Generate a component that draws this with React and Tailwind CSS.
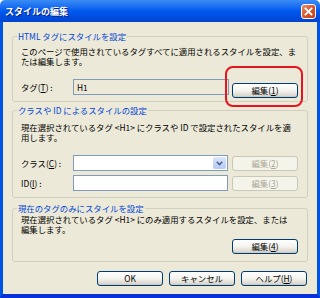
import { useState } from 'react'

const font = { fontFamily: '"Noto Sans CJK JP", "Noto Sans", sans-serif' }

function XpButton({ children, disabled, className = '' }) {
  return (
    <button
      disabled={disabled}
      className={`h-[15px] w-[66px] rounded-[3px] border text-[8.4px] leading-[13px] ${
        disabled
          ? 'border-[#c9c7ba] bg-[#f5f4ea] text-[#aca899]'
          : 'border-[#003c74] bg-gradient-to-b from-[#ffffff] via-[#f3f3ef] to-[#d6d0c5] text-black shadow-[inset_0_-1px_0_#cdcac0]'
      } ${className}`}
    >
      {children}
    </button>
  )
}

function Group({ title, children, className = '' }) {
  return (
    <fieldset className={`mx-[9px] rounded-[3px] border border-[#d0d0bf] pl-[8px] pr-[9px] ${className}`}>
      <legend className="-ml-[4px] px-[1px] text-[8.4px] leading-[10px] text-[#0046d5]">{title}</legend>
      {children}
    </fieldset>
  )
}

export default function App() {
  const [cls, setCls] = useState('')
  const [id, setId] = useState('')

  return (
    <div className="flex h-[298px] w-[320px] flex-col overflow-hidden bg-white" style={font}>
      {/* Title bar */}
      <div className="flex h-[22px] shrink-0 items-center justify-between rounded-t-[5px] bg-gradient-to-b from-[#3b8cf5] via-[#0058ee] to-[#0043d0] pl-[5px] pr-[4px]">
        <span className="text-[9px] font-bold leading-none text-white [text-shadow:1px_1px_0_#0a1e80]">スタイルの編集</span>
        <div className="flex h-[15px] w-[15px] items-center justify-center rounded-[3px] border border-white bg-gradient-to-br from-[#e88f6c] via-[#d9542c] to-[#c2401c]">
          <svg width="9" height="9" viewBox="0 0 9 9">
            <path d="M1.5 1.5 L7.5 7.5 M7.5 1.5 L1.5 7.5" stroke="#fff" strokeWidth="1.8" strokeLinecap="square" />
          </svg>
        </div>
      </div>

      {/* Body */}
      <div className="flex flex-1 flex-col border-x-[3px] border-b-[4px] border-x-[#0054e3] border-b-[#0831d9] bg-[#ece9d8] text-black">
        <Group title="HTML タグにスタイルを設定" className="mt-[9px] pb-[6px] pt-[5px]">
          <p className="whitespace-nowrap text-[8.4px] leading-[10px]">
            このページで使用されているタグすべてに適用されるスタイルを設定、ま
            <br />
            たは編集します。
          </p>
          <div className="mt-[13px] flex h-[16px] items-center">
            <span className="w-[52px] text-[8.4px] leading-none">
              タグ(<u>T</u>) :
            </span>
            <div className="flex h-[16px] w-[156px] items-center border border-[#7f9db9] bg-[#ece9d8] px-[3px] text-[8.4px]">H1</div>
            <div className="relative ml-auto">
              <XpButton>
                編集(<u>1</u>)
              </XpButton>
              <div className="pointer-events-none absolute -bottom-[8px] -left-[7px] -right-[5px] -top-[9px] rounded-[8px] border-2 border-[#e5141e]" />
            </div>
          </div>
        </Group>

        <Group title="クラスや ID によるスタイルの設定" className="mt-[3px] pb-[6px] pt-[7px]">
          <p className="whitespace-nowrap text-[8.4px] leading-[10px]">
            現在選択されているタグ &lt;H1&gt; にクラスや ID で設定されたスタイルを適
            <br />
            用します。
          </p>
          <div className="mt-[13px] flex h-[16px] items-center">
            <span className="w-[52px] text-[8.4px] leading-none">
              クラス(<u>C</u>) :
            </span>
            <div className="flex h-[16px] w-[155px] items-center border border-[#7f9db9] bg-white">
              <input
                value={cls}
                onChange={(e) => setCls(e.target.value)}
                className="h-full min-w-0 flex-1 bg-transparent px-[3px] text-[8.4px] outline-none"
              />
              <div className="m-[1px] flex h-[12px] w-[13px] items-center justify-center rounded-[2px] bg-gradient-to-b from-[#dce7fd] to-[#b3c8f5]">
                <svg width="7" height="5" viewBox="0 0 7 5">
                  <path d="M0.8 0.8 L3.5 3.6 L6.2 0.8" fill="none" stroke="#4d6185" strokeWidth="1.5" />
                </svg>
              </div>
            </div>
            <XpButton disabled className="ml-auto">
              編集(<u>2</u>)
            </XpButton>
          </div>
          <div className="mt-[4px] flex h-[16px] items-center">
            <span className="w-[52px] text-[8.4px] leading-none">
              ID(<u>I</u>) :
            </span>
            <input
              value={id}
              onChange={(e) => setId(e.target.value)}
              className="h-[16px] w-[155px] border border-[#7f9db9] bg-white px-[3px] text-[8.4px] outline-none"
            />
            <XpButton disabled className="ml-auto">
              編集(<u>3</u>)
            </XpButton>
          </div>
        </Group>

        <Group title="現在のタグのみにスタイルを設定" className="mt-[5px] pb-[7px] pt-[1px]">
          <p className="whitespace-nowrap text-[8.4px] leading-[10px]">
            現在選択されているタグ &lt;H1&gt; にのみ適用するスタイルを設定、または
            <br />
            編集します。
          </p>
          <div className="mt-[5px] flex justify-end">
            <XpButton>
              編集(<u>4</u>)
            </XpButton>
          </div>
        </Group>

        <div className="mt-[9px] flex justify-end gap-[6px] pr-[10px]">
          <XpButton>OK</XpButton>
          <XpButton>キャンセル</XpButton>
          <XpButton>
            ヘルプ(<u>H</u>)
          </XpButton>
        </div>
      </div>
    </div>
  )
}
